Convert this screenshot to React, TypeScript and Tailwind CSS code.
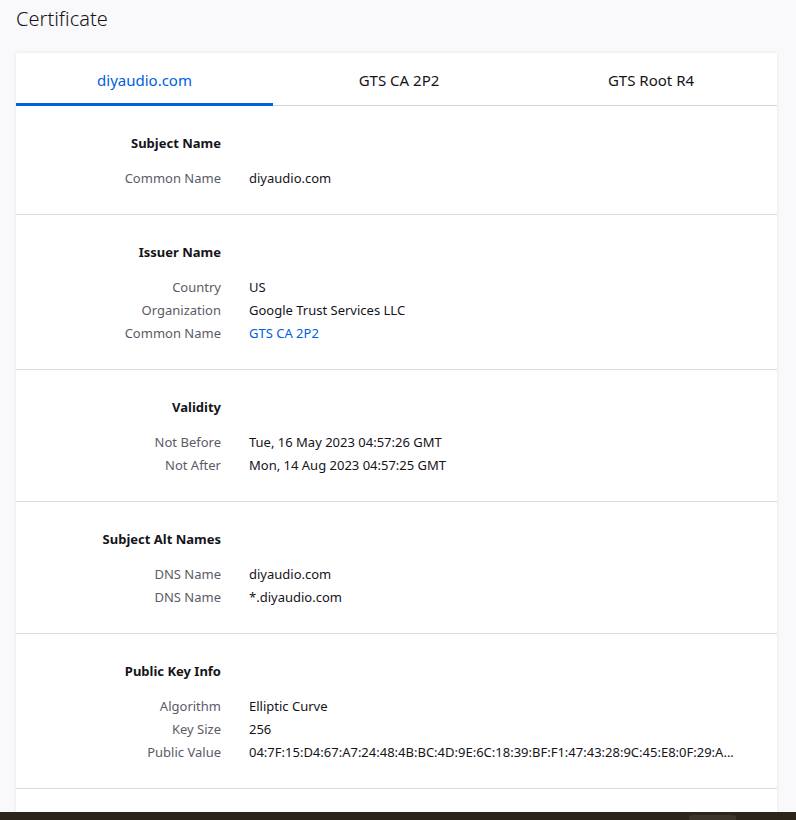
import React from 'react';

type Row = { label: string; value: string; link?: boolean };
type Section = { title: string; rows: Row[] };

const sections: Section[] = [
  { title: 'Subject Name', rows: [{ label: 'Common Name', value: 'diyaudio.com' }] },
  {
    title: 'Issuer Name',
    rows: [
      { label: 'Country', value: 'US' },
      { label: 'Organization', value: 'Google Trust Services LLC' },
      { label: 'Common Name', value: 'GTS CA 2P2', link: true },
    ],
  },
  {
    title: 'Validity',
    rows: [
      { label: 'Not Before', value: 'Tue, 16 May 2023 04:57:26 GMT' },
      { label: 'Not After', value: 'Mon, 14 Aug 2023 04:57:25 GMT' },
    ],
  },
  {
    title: 'Subject Alt Names',
    rows: [
      { label: 'DNS Name', value: 'diyaudio.com' },
      { label: 'DNS Name', value: '*.diyaudio.com' },
    ],
  },
  {
    title: 'Public Key Info',
    rows: [
      { label: 'Algorithm', value: 'Elliptic Curve' },
      { label: 'Key Size', value: '256' },
      {
        label: 'Public Value',
        value: '04:7F:15:D4:67:A7:24:48:4B:BC:4D:9E:6C:18:39:BF:F1:47:43:28:9C:45:E8:0F:29:A...',
      },
    ],
  },
];

const tabs = ['diyaudio.com', 'GTS CA 2P2', 'GTS Root R4'];

const CertSection: React.FC<{ section: Section }> = ({ section }) => (
  <div className="border-b border-[#dcdce0] pt-[26px] pb-[24px]">
    <div className="w-[205px] text-right text-[13px] leading-[23px] font-bold text-[#15141a]">
      {section.title}
    </div>
    <div className="mt-[12px]">
      {section.rows.map((row, i) => (
        <div key={i} className="flex text-[13px] leading-[23px]">
          <div className="w-[205px] shrink-0 text-right text-[#5b5b66]">{row.label}</div>
          <div
            className={
              'ml-[28px] whitespace-nowrap ' + (row.link ? 'text-[#0060df]' : 'text-[#15141a]')
            }
          >
            {row.value}
          </div>
        </div>
      ))}
    </div>
  </div>
);

export default function App() {
  return (
    <div
      className="w-[796px] h-[820px] overflow-hidden bg-[#f9f9fb] flex flex-col"
      style={{ fontFamily: '"Segoe UI", "Noto Sans", "Open Sans", sans-serif' }}
    >
      <div className="flex-1 overflow-hidden px-4">
        <h1 className="text-[20px] font-light leading-[38px] text-[#15141a]">Certificate</h1>
        <div className="mt-[15px] bg-white shadow-[0_0_4px_rgba(0,0,0,0.08)] w-[761px]">
          <div className="flex border-b border-[#d7d7db]">
            {tabs.map((t, i) => (
              <div
                key={t}
                className={
                  'h-[53px] pt-[4px] -mb-px flex items-center justify-center text-[15px] border-b-[3px] ' +
                  (i === 0
                    ? 'w-[257px] shrink-0 text-[#0060df] border-[#0060df]'
                    : 'flex-1 text-[#15141a] border-transparent')
                }
              >
                {t}
              </div>
            ))}
          </div>
          {sections.map((s) => (
            <CertSection key={s.title} section={s} />
          ))}
          <div className="h-[40px]" />
        </div>
      </div>
      <div className="h-[8px] shrink-0 bg-[#2d2519] flex justify-end pr-[60px] pt-[3px]">
        <div className="w-[47px] h-full rounded-t-[3px] bg-[#3d3528]" />
      </div>
    </div>
  );
}
